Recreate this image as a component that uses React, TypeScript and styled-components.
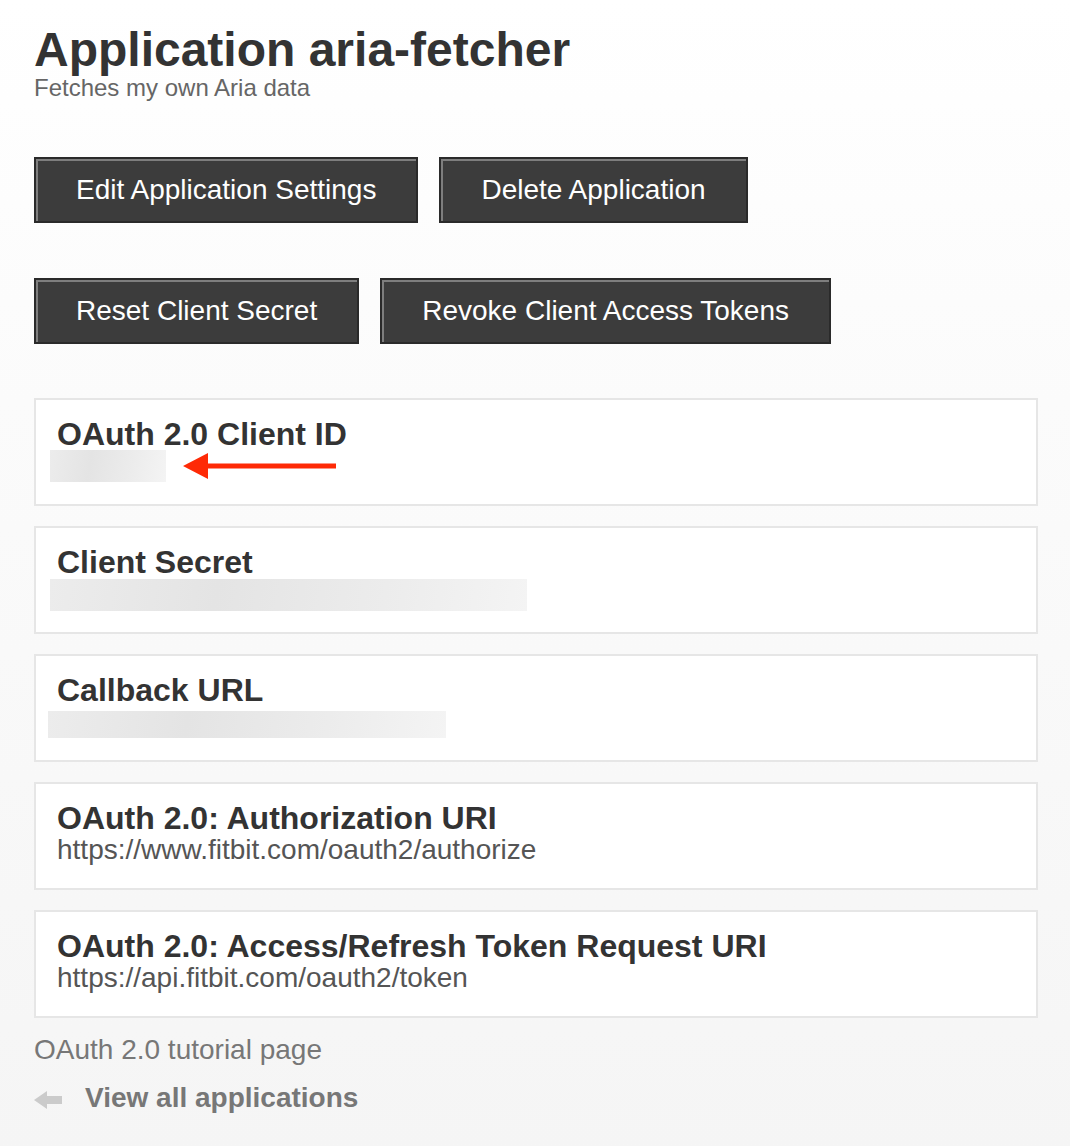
import React from 'react'
import styled, { createGlobalStyle } from 'styled-components'

const GlobalStyle = createGlobalStyle`
  html, body {
    margin: 0;
    padding: 0;
  }
  body {
    font-family: "Liberation Sans", Arial, Helvetica, sans-serif;
    background: linear-gradient(180deg, #ffffff 0%, #fbfbfb 35%, #f5f5f5 100%);
    min-height: 1146px;
    color: #333;
  }
`

const Page = styled.div`
  padding: 26px 32px 40px 34px;
  box-sizing: border-box;
  width: 1070px;
  min-height: 1146px;
`

const Title = styled.h1`
  margin: 0;
  font-size: 48px;
  line-height: 1;
  font-weight: 700;
  color: #333;
`

const Subtitle = styled.div`
  margin-top: 2px;
  font-size: 24px;
  line-height: 1;
  color: #666;
`

const ButtonRow = styled.div<{ $top: number }>`
  display: flex;
  gap: 21px;
  margin-top: ${(p) => p.$top}px;
`

const DarkButton = styled.button`
  font-family: inherit;
  font-size: 28px;
  line-height: 1;
  color: #fff;
  background: #3c3c3c;
  border: 2px solid #2a2a2a;
  box-shadow: inset 2px 2px 0 #7e7e7e;
  padding: 17px 40px;
  margin: 0;
  border-radius: 0;
  cursor: pointer;
  white-space: nowrap;
`

const CardList = styled.div`
  display: flex;
  flex-direction: column;
  gap: 20px;
  margin-top: 54px;
`

const Card = styled.div`
  box-sizing: border-box;
  min-height: 108px;
  background: #fff;
  border: 2px solid #e6e6e6;
  padding: 18px 21px 0 21px;
`

const CardTitle = styled.div`
  font-size: 32px;
  line-height: 1;
  font-weight: 700;
  color: #333;
`

const CardValue = styled.div`
  margin-top: 2px;
  font-size: 28px;
  line-height: 1;
  color: #555;
`

const HiddenRow = styled.div`
  display: flex;
  align-items: center;
  gap: 17px;
`

const Redacted = styled.div<{ $w: number; $h: number; $x: number; $y: number }>`
  width: ${(p) => p.$w}px;
  height: ${(p) => p.$h}px;
  margin-left: ${(p) => p.$x}px;
  margin-top: ${(p) => p.$y}px;
  background: linear-gradient(100deg, #ececec 0%, #e4e4e4 35%, #ececec 70%, #f4f4f4 100%);
`

const Footer = styled.div`
  margin-top: 18px;
  font-size: 28px;
  line-height: 1;
  color: #777;
`

const BackLink = styled.a`
  display: flex;
  align-items: center;
  gap: 23px;
  margin-top: 20px;
  font-size: 28px;
  line-height: 1;
  font-weight: 700;
  color: #777;
  text-decoration: none;
  svg {
    margin-top: 4px;
  }
`

const RedArrow = () => (
  <svg width="154" height="26" viewBox="0 0 154 26">
    <polygon points="0,13 25,0 25,10.5 153,10.5 153,15.5 25,15.5 25,26" fill="#fe2a06" />
  </svg>
)

const GreyArrow = () => (
  <svg width="28" height="18" viewBox="0 0 28 18">
    <polygon points="0,9 13,0 13,5 28,5 28,13 13,13 13,18" fill="#cbcbcb" />
  </svg>
)

export default function App() {
  return (
    <>
      <GlobalStyle />
      <Page>
        <Title>Application aria-fetcher</Title>
        <Subtitle>Fetches my own Aria data</Subtitle>

        <ButtonRow $top={57}>
          <DarkButton>Edit Application Settings</DarkButton>
          <DarkButton>Delete Application</DarkButton>
        </ButtonRow>
        <ButtonRow $top={55}>
          <DarkButton>Reset Client Secret</DarkButton>
          <DarkButton>Revoke Client Access Tokens</DarkButton>
        </ButtonRow>

        <CardList>
          <Card>
            <CardTitle>OAuth 2.0 Client ID</CardTitle>
            <HiddenRow>
              <Redacted $w={116} $h={32} $x={-7} $y={0} />
              <RedArrow />
            </HiddenRow>
          </Card>
          <Card>
            <CardTitle>Client Secret</CardTitle>
            <Redacted $w={477} $h={32} $x={-7} $y={1} />
          </Card>
          <Card>
            <CardTitle>Callback URL</CardTitle>
            <Redacted $w={398} $h={27} $x={-9} $y={5} />
          </Card>
          <Card>
            <CardTitle>OAuth 2.0: Authorization URI</CardTitle>
            <CardValue>https://www.fitbit.com/oauth2/authorize</CardValue>
          </Card>
          <Card>
            <CardTitle>OAuth 2.0: Access/Refresh Token Request URI</CardTitle>
            <CardValue>https://api.fitbit.com/oauth2/token</CardValue>
          </Card>
        </CardList>

        <Footer>OAuth 2.0 tutorial page</Footer>
        <BackLink href="#">
          <GreyArrow />
          View all applications
        </BackLink>
      </Page>
    </>
  )
}
